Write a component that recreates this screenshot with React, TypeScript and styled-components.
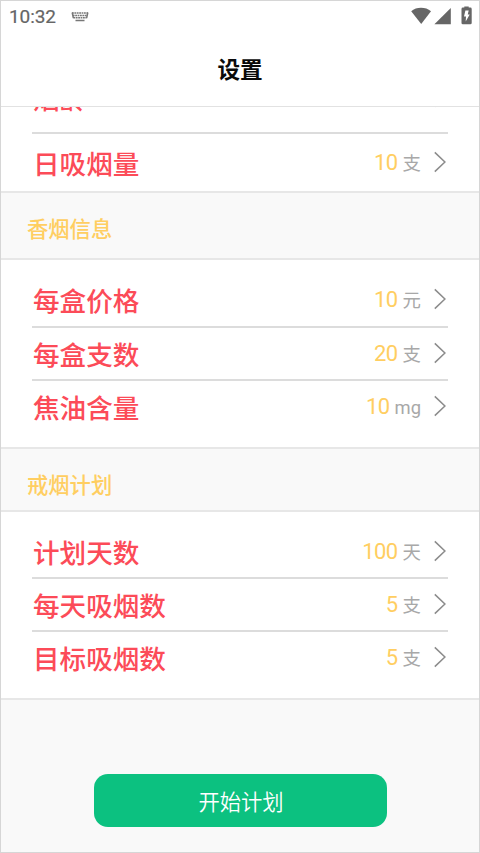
import React from "react";
import styled, { createGlobalStyle } from "styled-components";

const GlobalStyle = createGlobalStyle`
  * { box-sizing: border-box; }
  body {
    margin: 0;
    background: #ffffff;
    font-family: Roboto, "Noto Sans CJK SC", sans-serif;
  }
`;

const Screen = styled.main`
  display: flex;
  flex-direction: column;
  width: 480px;
  height: 853px;
  overflow: hidden;
  border: 1px solid #d6d6d6;
  background: #f9f9f9;
`;

const StatusBar = styled.div`
  display: flex;
  flex: none;
  align-items: center;
  height: 31px;
  padding: 0 7px 0 8px;
  background: #ffffff;
  color: #666666;
`;

const Clock = styled.span`
  width: 62px;
  font-size: 19px;
  line-height: 30px;
  font-weight: 400;
  letter-spacing: -0.1px;
  -webkit-text-stroke: 0.2px #666666;
`;

const StatusIcons = styled.div`
  display: flex;
  align-items: center;
  margin-left: auto;
`;

const TitleBar = styled.header`
  display: flex;
  flex: none;
  align-items: center;
  justify-content: center;
  height: 75px;
  padding-top: 4px;
  border-bottom: 1px solid #e2e2e2;
  background: #ffffff;
`;

const Title = styled.h1`
  margin: 0;
  color: #0a0a0a;
  font-size: 22.6px;
  line-height: 32px;
  font-weight: 700;
`;

const ScrollArea = styled.div`
  flex: 1;
  min-height: 0;
  overflow: hidden;
`;

const ScrollContent = styled.div`
  display: flex;
  flex-direction: column;
  margin-top: -37px;
`;

const Group = styled.section<{ $height: number; $top: number }>`
  height: ${(p) => p.$height}px;
  padding: ${(p) => p.$top}px 31px 0 31px;
  border-bottom: 2px solid #e7e7e7;
  background: #ffffff;
`;

const Row = styled.div<{ $height: number; $top: number; $last?: boolean }>`
  display: flex;
  align-items: flex-start;
  height: ${(p) => p.$height}px;
  padding-top: ${(p) => p.$top}px;
  border-bottom: ${(p) => (p.$last ? "none" : "2px solid #dcdcdc")};
`;

const Label = styled.span`
  flex: 1;
  padding-left: 1px;
  color: #fc4b58;
  font-size: 26.6px;
  line-height: 39px;
  font-weight: 500;
`;

const Value = styled.span`
  margin-right: 5px;
  color: #ffce61;
  font-size: 22px;
  line-height: 36px;
  letter-spacing: -0.6px;
`;

const Unit = styled.span`
  color: #a8a8a8;
  font-size: 18.4px;
  line-height: 38px;
`;

const Chevron = styled.svg`
  flex: none;
  width: 14px;
  height: 22px;
  margin: 6px 1px 0 12px;
`;

const SectionTitle = styled.h2<{ $height: number; $top: number }>`
  height: ${(p) => p.$height}px;
  margin: 0;
  padding: ${(p) => p.$top}px 0 0 26px;
  border-bottom: 2px solid #e7e7e7;
  color: #ffce61;
  font-size: 21.3px;
  line-height: 32px;
  font-weight: 500;
`;

const StartButton = styled.button`
  align-self: center;
  width: 293px;
  height: 53px;
  margin-top: 74px;
  padding: 4px 0 0 2px;
  border: 0;
  border-radius: 14px;
  background: #0cc180;
  color: #ffffff;
  font-family: inherit;
  font-size: 21.3px;
  line-height: 32px;
  font-weight: 350;
`;

const KeyboardIcon = () => (
  <svg width="18" height="12" viewBox="0 0 18 12">
    <path d="M1 2h16M1.8 4.4h14.4M2.4 6.8h13.2" stroke="#777" strokeWidth="1.5" strokeDasharray="1.8 .6" fill="none" />
    <path d="M1.2 1.5l1.2 5.6M16.8 1.5l-1.2 5.6M4.5 9.6h9" stroke="#777" strokeWidth="1.5" fill="none" />
  </svg>
);

const StatusGlyphs = () => (
  <svg width="64" height="22" viewBox="0 0 64 22" fill="#666">
    <path d="M3.2 5.2C8.4.6 17.6.6 23 5.2L13.2 18z" />
    <path d="M42.8 2V18.2H26.4z" />
    <path d="M56.3 1.5V.5h4.4v1h1.6q1.4 0 1.4 1.4v14q0 1.4-1.4 1.4h-7.4q-1.4 0-1.4-1.4v-14q0-1.4 1.4-1.4z" />
    <path d="M57.4 4.4h3.3l-1 4.1h2l-4 7 .3-5.1h-2z" fill="#fff" />
  </svg>
);

interface SettingProps {
  label: string;
  value: number;
  unit: string;
  height?: number;
  top?: number;
  last?: boolean;
}

const Setting = ({ label, value, unit, height = 53, top = 7, last }: SettingProps) => (
  <Row $height={height} $top={top} $last={last}>
    <Label>{label}</Label>
    <Value>{value}</Value>
    <Unit>{unit}</Unit>
    <Chevron viewBox="0 0 14 22" fill="none" stroke="#8c8c8c" strokeWidth="1.5">
      <path d="M1.8 1.4L11.9 11L1.8 20.6" />
    </Chevron>
  </Row>
);

export default function App() {
  return (
    <>
      <GlobalStyle />
      <Screen>
        <StatusBar>
          <Clock>10:32</Clock>
          <KeyboardIcon />
          <StatusIcons>
            <StatusGlyphs />
          </StatusIcons>
        </StatusBar>
        <TitleBar>
          <Title>设置</Title>
        </TitleBar>
        <ScrollArea>
          <ScrollContent>
            <Group $height={123} $top={3}>
              <Setting label="烟龄" value={10} unit="年" height={61} top={7} />
              <Setting label="日吸烟量" value={10} unit="支" top={11} last />
            </Group>
            <SectionTitle $height={67} $top={21}>香烟信息</SectionTitle>
            <Group $height={189} $top={15}>
              <Setting label="每盒价格" value={10} unit="元" />
              <Setting label="每盒支数" value={20} unit="支" top={8} />
              <Setting label="焦油含量" value={10} unit="mg" top={8} last />
            </Group>
            <SectionTitle $height={63} $top={21}>戒烟计划</SectionTitle>
            <Group $height={188} $top={14}>
              <Setting label="计划天数" value={100} unit="天" top={8} />
              <Setting label="每天吸烟数" value={5} unit="支" top={8} />
              <Setting label="目标吸烟数" value={5} unit="支" top={8} last />
            </Group>
            <StartButton type="button">开始计划</StartButton>
          </ScrollContent>
        </ScrollArea>
      </Screen>
    </>
  );
}
